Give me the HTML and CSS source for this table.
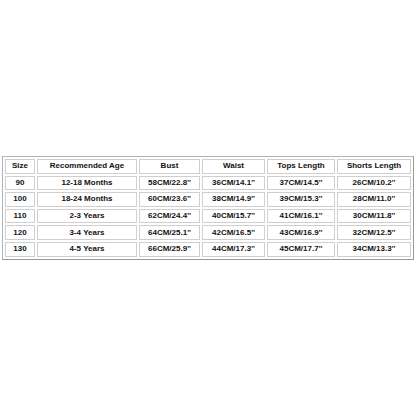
FILE: index.html
```html
<!DOCTYPE html>
<html>
<head>
<meta charset="utf-8">
<link rel="stylesheet" href="styles.css">
</head>
<body>
<div class="page">
<table class="size-table">
<colgroup>
<col class="c-size"><col class="c-age"><col class="c-bust"><col class="c-waist"><col class="c-tops"><col class="c-shorts">
</colgroup>
<tr><td>Size</td><td>Recommended Age</td><td>Bust</td><td>Waist</td><td>Tops Length</td><td>Shorts Length</td></tr>
<tr><td>90</td><td>12-18 Months</td><td>58CM/22.8''</td><td>36CM/14.1''</td><td>37CM/14.5''</td><td>26CM/10.2''</td></tr>
<tr><td>100</td><td>18-24 Months</td><td>60CM/23.6''</td><td>38CM/14.9''</td><td>39CM/15.3''</td><td>28CM/11.0''</td></tr>
<tr><td>110</td><td>2-3 Years</td><td>62CM/24.4''</td><td>40CM/15.7''</td><td>41CM/16.1''</td><td>30CM/11.8''</td></tr>
<tr><td>120</td><td>3-4 Years</td><td>64CM/25.1''</td><td>42CM/16.5''</td><td>43CM/16.9''</td><td>32CM/12.5''</td></tr>
<tr><td>130</td><td>4-5 Years</td><td>66CM/25.9''</td><td>44CM/17.3''</td><td>45CM/17.7''</td><td>34CM/13.3''</td></tr>
</table>
</div>
</body>
</html>
```
FILE: styles.css
```css
html, body {
  margin: 0;
  padding: 0;
  background: #ffffff;
}
.page {
  width: 416px;
  height: 416px;
  padding: 156px 0 0 2px;
  box-sizing: border-box;
}
.size-table {
  width: 410px;
  border-collapse: separate;
  border-spacing: 2px;
  border: 1px solid #b4b4b4;
  border-right-color: #9a9a9a;
  border-bottom-color: #9a9a9a;
  table-layout: fixed;
  font-family: "Liberation Sans", Arial, sans-serif;
  font-weight: bold;
  font-size: 8px;
  color: #111111;
}
.size-table td {
  border: 1px solid #cfcfcf;
  height: 12.6px;
  padding: 0;
  text-align: center;
  vertical-align: middle;
  line-height: 10px;
  white-space: nowrap;
}
.c-size { width: 30px; }
.c-age { width: 100px; }
.c-bust { width: 61px; }
.c-waist { width: 63px; }
.c-tops { width: 68px; }
.c-shorts { width: 74px; }
```
